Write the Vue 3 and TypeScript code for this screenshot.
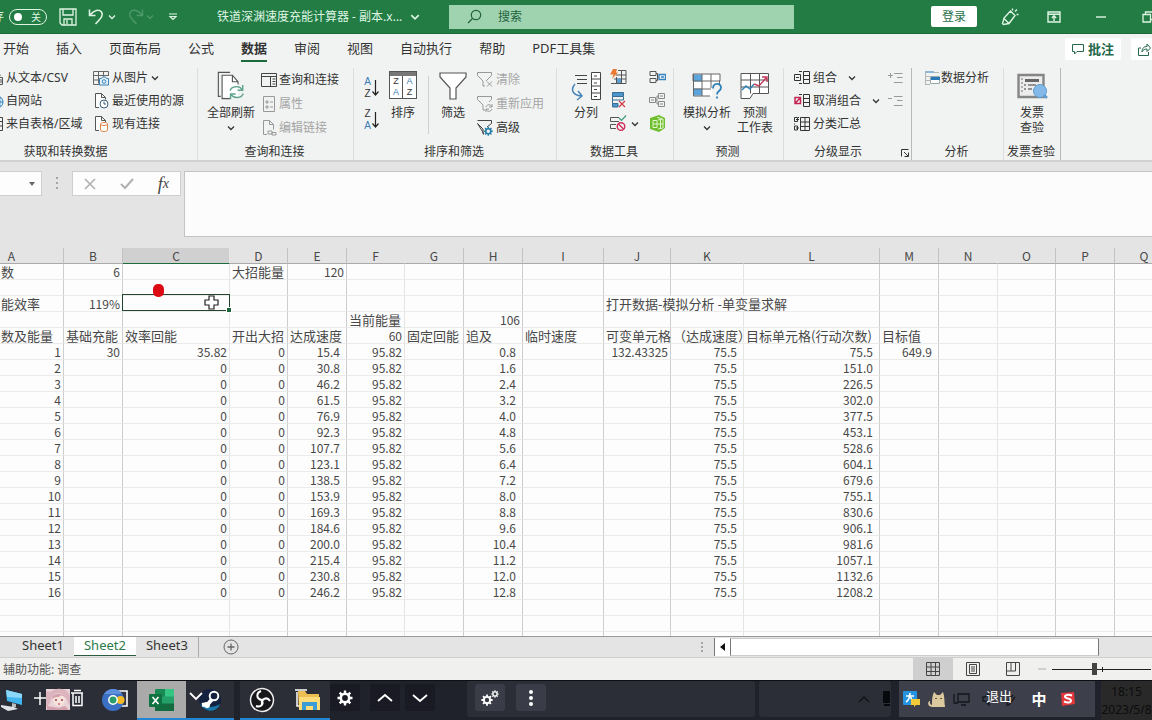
<script setup lang="ts">
import { ref } from 'vue'

interface Cell {
  key: string
  text: string
  kind: string
  span: number
}

const tabs = ['开始', '插入', '页面布局', '公式', '数据', '审阅', '视图', '自动执行', '帮助', 'PDF工具集']
const activeTab = ref('数据')
const sheets = ['Sheet1', 'Sheet2', 'Sheet3']
const activeSheet = ref('Sheet2')
const zoomLevel = ref(43)
const autosave = ref(false)
const formula = ref('')
const cellName = ref('')

const columns = 'ABCDEFGHIJKLMNOPQ'.split('')
const faintColumns = ['C', 'F', 'K', 'N']
const rowCount = 24

const speeds = ['15.4', '30.8', '46.2', '61.5', '76.9', '92.3', '107.7', '123.1', '138.5', '153.9', '169.3', '184.6', '200.0', '215.4', '230.8', '246.2']
const targets = ['75.5', '151.0', '226.5', '302.0', '377.5', '453.1', '528.6', '604.1', '679.6', '755.1', '830.6', '906.1', '981.6', '1057.1', '1132.6', '1208.2']

const values: Record<string, string> = {
  A1: '数', B1: '6', D1: '大招能量', E1: '120',
  A3: '能效率', B3: '119%', J3: '打开数据-模拟分析 -单变量求解',
  F4: '当前能量', H4: '106',
  A5: '数及能量', B5: '基础充能', C5: '效率回能', D5: '开出大招', E5: '达成速度', F5: '60',
  G5: '固定回能', H5: '追及', I5: '临时速度', J5: '可变单元格', K5: '（达成速度）',
  L5: '目标单元格(行动次数)', M5: '目标值',
  B6: '30', J6: '132.43325', M6: '649.9',
}

speeds.forEach((speed, i) => {
  const row = i + 6
  values['A' + row] = String(i + 1)
  values['C' + row] = i === 0 ? '35.82' : '0'
  values['D' + row] = '0'
  values['E' + row] = speed
  values['F' + row] = '95.82'
  values['H' + row] = ((i + 1) * 0.8).toFixed(1)
  values['K' + row] = '75.5'
  values['L' + row] = targets[i]
})

function kindOf(col: string, text: string): string {
  if (!/^[\d.%]+$/.test(text)) return 'text'
  return 'EHKLM'.includes(col) && text.includes('.') ? 'num dec' : 'num'
}

const rows: Cell[][] = Array.from({ length: rowCount }, (_, r) =>
  columns
    .filter((c) => !(r === 2 && (c === 'K' || c === 'L')))
    .map((c) => {
      const key = c + (r + 1)
      const text = values[key] ?? ''
      const faint = faintColumns.includes(c) ? ' faint' : ''
      return { key, text, kind: kindOf(c, text) + faint, span: key === 'J3' ? 3 : 1 }
    }),
)
</script>

<template>
  <div class="window">
    <svg class="defs" aria-hidden="true">
      <symbol id="chev" viewBox="0 0 8 8"><path d="M1 2.5 4 5.5 7 2.5" fill="none" stroke="currentColor" stroke-width="1.3" /></symbol>
      <symbol id="funnel" viewBox="0 0 28 28"><path d="M1 1h26v4L17 16v11h-6V16L1 5z" fill="#fff" stroke="currentColor" stroke-width="1.2" /></symbol>
      <symbol id="gear" viewBox="0 0 16 16">
        <circle cx="8" cy="8" r="4.2" fill="none" stroke="currentColor" stroke-width="2.6" />
        <path d="M8 0.5v3M8 12.5v3M0.5 8h3M12.5 8h3M2.7 2.7l2.1 2.1M11.2 11.2l2.1 2.1M13.3 2.7l-2.1 2.1M4.8 11.2l-2.1 2.1" stroke="currentColor" stroke-width="2.4" />
      </symbol>
    </svg>

    <header class="titlebar">
      <div class="quick">
        <label class="autosave"><span class="clip">存</span><input v-model="autosave" type="checkbox" class="hidden-check" /><span class="toggle"><i></i>关</span></label>
        <button class="tb save" aria-label="保存"><svg width="18" height="18" viewBox="0 0 18 18" fill="none" stroke="currentColor" stroke-width="1.3"><path d="M1 1h16v16H3l-2-2zM4 1v6h10V1M5 17v-6h8v6M8 12v4" /></svg></button>
        <button class="tb undo" aria-label="撤消"><svg width="18" height="18" viewBox="0 0 18 18" fill="none" stroke="currentColor" stroke-width="1.6"><path d="M1.500 1.500v6h6M2 7C6 2 11 1 13.500 4c2.500 3.500-1 6.500-6 12" /></svg><svg width="8" height="8"><use href="#chev" /></svg></button>
        <button class="tb redo" aria-label="恢复"><svg width="18" height="18" viewBox="0 0 18 18" fill="none" stroke="currentColor" stroke-width="1.400"><path d="M16.500 1.500v6h-6M16 7C12 2 7 1 4.500 4c-2.500 3.500 1 6.500 6 12" /></svg><svg width="8" height="8"><use href="#chev" /></svg></button>
        <button class="tb" aria-label="自定义"><svg width="10" height="8" viewBox="0 0 10 8" fill="none" stroke="currentColor" stroke-width="1.2"><path d="M1 1h8M2 3.500h6L5 6.500z" /></svg></button>
      </div>
      <button class="filename">铁道深渊速度充能计算器 - 副本.x...<svg width="10" height="10"><use href="#chev" /></svg></button>
      <label class="search">
        <svg width="15" height="15" viewBox="0 0 15 15" fill="none" stroke="currentColor" stroke-width="1.200"><circle cx="9" cy="6" r="4.700" /><path d="M5.500 9.500 1 14" /></svg>
        <input type="text" placeholder="搜索" aria-label="搜索" />
      </label>
      <div class="window-tools">
        <button class="login">登录</button>
        <button class="tb pen" aria-label="墨迹"><svg width="18" height="18" viewBox="0 0 18 18" fill="none" stroke="currentColor" stroke-width="1.400"><path d="M9.500 3 14 7.500 8 15.500l-5.500 1-1-1 1.500-5.500zM3 10.500l5 5M11.500 2.500V.5M14 3.500l2-2M15.500 6.500h2" /></svg></button>
        <button class="tb" aria-label="功能区显示选项"><svg width="14" height="12" viewBox="0 0 14 12" fill="none" stroke="currentColor" stroke-width="1.400"><path d="M1 1h12v10H1zM1 3.200h12M7 10V5M4.800 7 7 4.800 9.200 7" /></svg></button>
        <button class="tb min" aria-label="最小化"><svg width="10" height="2"><path d="M0 1h10" stroke="currentColor" stroke-width="1.400" /></svg></button>
        <button class="tb" aria-label="还原"><svg width="12" height="12" viewBox="0 0 12 12" fill="none" stroke="currentColor" stroke-width="1.300"><path d="M1 3.500h7.500V11H1zM3.500 3.500V1H11v7.500H8.500" /></svg></button>
      </div>
    </header>

    <nav class="tabs">
      <button v-for="t in tabs" :key="t" class="tab" :class="{ active: t === activeTab }" @click="activeTab = t">{{ t }}</button>
      <div class="spacer"></div>
      <button class="pill comment"><svg width="12" height="12" viewBox="0 0 12 12" fill="none" stroke="currentColor"><path d="M.5 1.500h11v7H5L2.500 11V8.500h-2z" /></svg>批注</button>
      <button class="pill share" aria-label="共享"><svg width="13" height="13" viewBox="0 0 13 13" fill="none" stroke="currentColor"><path d="M3 5H.5v7.500h10V9M4 9c0-4 2-5.500 5-5.500V1l3.500 4L9 8.500V6C7 6 5 6.500 4 9z" /></svg></button>
    </nav>

    <section class="ribbon">
      <div class="group g-get">
        <div class="body">
          <div class="stack cut">
            <button class="cmd"><svg width="16" height="16" viewBox="0 0 16 16" fill="none" stroke="#555"><path d="M3.500 1.500h6l3 4M7.500 7.500h7v7h-7zM9 10h5M9 12h5" /></svg>从文本/CSV</button>
            <button class="cmd"><svg width="16" height="16" viewBox="0 0 16 16" fill="none" stroke="#2f80bd"><circle cx="9" cy="9" r="6" fill="#dceefa" /><ellipse cx="9" cy="9" rx="3" ry="6" /><path d="M3 9h12M5 5h8M5 13h8" /></svg>自网站</button>
            <button class="cmd"><svg width="16" height="16" viewBox="0 0 16 16" fill="none" stroke="#444"><path d="M1.500 1.500h13v13h-13zM1 5.500h13M8 5v9M1 10h13" /></svg>来自表格/区域</button>
          </div>
          <div class="stack">
            <button class="cmd"><svg width="16" height="16" viewBox="0 0 16 16" fill="none" stroke="#666"><path d="M15.500 6V1.500H.5v13H6M.5 5.500h15M.5 10H6M5.500 1.500v12M10.500 1.500v5" /><path d="M6.500 8.500h2l1-1.500h3l1 1.500h2v6.500h-9z" fill="#e3f1fb" stroke="#3a82b8" /><circle cx="11" cy="11.500" r="1.800" stroke="#3a82b8" /></svg>从图片<svg class="chev" width="8" height="8"><use href="#chev" /></svg></button>
            <button class="cmd"><svg width="16" height="16" viewBox="0 0 16 16" fill="none" stroke="#555"><path d="M6 14.500H2.500v-14h6l4 4v2M8.500.5v4h4" fill="#fff" /><circle cx="11" cy="11" r="4" fill="#fff" stroke="#3b5f7f" /><path d="M11 8.500V11h2" stroke="#3b5f7f" /></svg>最近使用的源</button>
            <button class="cmd"><svg width="16" height="16" viewBox="0 0 16 16" fill="none" stroke="#555"><path d="M6 14.500H2.500v-14h6l4 4v2M8.500.5v4h4" fill="#fff" /><path d="M7.500 8v6c0 2 7 2 7 0V8c0-2-7-2-7 0s7 2 7 0" fill="#fff" stroke="#d98548" /></svg>现有连接</button>
          </div>
        </div>
        <div class="caption">获取和转换数据</div>
      </div>

      <div class="group g-query">
        <div class="body">
          <button class="big wide"><svg width="30" height="32" viewBox="0 0 30 32" fill="none" stroke="#555" stroke-width="1.200"><path d="M4 27H1.500V1.500H14" /><path d="M5.500 4.500h10l7 7v16h-17z" fill="#fff" stroke="none" /><path d="M14 29.500H5.500v-25h11l6 7v3M16.500 4.500v7h6" /><path d="M14 21c1.500-5 10-6 13-1M27.500 15v5.500H22M28 24c-1.500 5-10 6-13 1M14.500 30v-5.500H20" stroke="#5fa58d" stroke-width="1.500" /></svg><span>全部刷新</span><svg width="8" height="8"><use href="#chev" /></svg></button>
          <div class="stack loose">
            <button class="cmd"><svg width="16" height="16" viewBox="0 0 16 16" fill="none" stroke="#444"><path d="M.5 1.500h15v13H.5zM.5 4.500h15M9.500 4.500v10M11.500 7h3M11.500 9.500h3M11.500 12h3" /></svg>查询和连接</button>
            <button class="cmd off" disabled><svg width="16" height="16" viewBox="0 0 16 16" fill="none" stroke="#999"><path d="M2.500.5h11v15h-11z" /><path d="M5 5h2v2H5zM5 10h2v2H5zM9 6h3M9 11h3" /></svg>属性</button>
            <button class="cmd off" disabled><svg width="16" height="16" viewBox="0 0 16 16" fill="none" stroke="#999"><path d="M6 14.500H2.500v-14h6l4 4v5M8.500.5v4h4M7 11h4v3H7zM11 12.500h4V15h-4z" /></svg>编辑链接</button>
          </div>
        </div>
        <div class="caption">查询和连接</div>
      </div>

      <div class="group g-sort">
        <div class="body">
          <div class="az">
            <button class="sort" aria-label="升序"><span><b>A</b><em>Z</em></span><svg width="7" height="18" viewBox="0 0 7 18" fill="none" stroke="#222" stroke-width="1.200"><path d="M3.500 1v15M.5 12.500l3 3.500 3-3.500" /></svg></button>
            <button class="sort" aria-label="降序"><span><em>Z</em><b>A</b></span><svg width="7" height="18" viewBox="0 0 7 18" fill="none" stroke="#222" stroke-width="1.200"><path d="M3.500 1v15M.5 12.500l3 3.500 3-3.500" /></svg></button>
          </div>
          <button class="big"><span class="sort-box"><i></i><b>Z</b><b class="blue">A</b><b class="blue">A</b><b>Z</b></span><span>排序</span></button>
          <div class="rule"></div>
          <button class="big"><svg width="28" height="28" color="#555"><use href="#funnel" /></svg><span>筛选</span></button>
          <div class="stack loose">
            <button class="cmd off" disabled><svg width="16" height="16" viewBox="0 0 16 16" fill="none" stroke="#999"><path d="M.5.5h14v3L9 9M6 14V9L.5 3.500v-3M6 14h2M10 9.500l5 5M15 9.500l-5 5" /></svg>清除</button>
            <button class="cmd off" disabled><svg width="16" height="16" viewBox="0 0 16 16" fill="none" stroke="#999"><path d="M.5.500h14v3L12 6M6 14V9L.5 3.500v-3M6 14h2M9 11c1-3 5-3 6 0M15 8v3h-3M15 13c-1 3-5 3-6 0M9 16v-3h3" /></svg>重新应用</button>
            <button class="cmd"><svg width="16" height="16" viewBox="0 0 16 16" fill="none" stroke="#444"><path d="M.5.500h14v3L10 7M7 14H6V9L.5 3.500z" /><g transform="translate(6.500 6.500) scale(.6)" color="#277fa8"><use href="#gear" width="16" height="16" /></g></svg>高级</button>
          </div>
        </div>
        <div class="caption">排序和筛选</div>
      </div>

      <div class="group g-tools">
        <div class="body">
          <button class="big"><svg width="30" height="30" viewBox="0 0 30 30" fill="none" stroke="#444"><path d="M20.500 1.500h9v27h-9zM20.500 8h9M20.500 15h9M20.500 22h9" fill="#fff" /><path d="M23 5h3M23 12h3M23 18.500h3M23 25.500h3M4 4.500h12M6 8.500h10M6 12.500h10" /><path d="M4 13c-5 6-2 11 6 12M7 20l4 5-5 4" stroke="#4b85ba" stroke-width="1.500" /></svg><span>分列</span></button>
          <div class="icons">
            <button aria-label="快速填充"><svg width="17" height="16" viewBox="0 0 17 16" fill="none" stroke="#555"><path d="M1 14.500h15v-13H8M6 6h10M4 10h12M11.500 1.500v13M6.500 8v7" /><path d="M7 9.500h4V14H7z" fill="#5a9fd2" stroke="none" /><path d="M3 0h4L6 3.500h2L2 10l1.500-4.500H0z" fill="#e97a32" stroke="none" /></svg></button>
            <button aria-label="删除重复值"><svg width="17" height="16" viewBox="0 0 17 16" fill="none" stroke="#3b6d94"><path d="M2.500 .500h11v4h-11z" fill="#4e95cc" /><path d="M2.500 4.500v7H8M2.500 8h11V5" /><path d="M2.500 11.500H8V15H2.500z" fill="#4e95cc" /><path d="m9 9 6 6M15 9l-6 6" stroke="#d33a45" stroke-width="1.200" /></svg></button>
            <button aria-label="数据验证"><svg width="17" height="16" viewBox="0 0 17 16" fill="none" stroke="#555"><path d="M9 2.500H.5v4H9M6 9.500H.5v4H6" /><path d="m9 3 2.500 2.500L16 .500" stroke="#3a9a75" stroke-width="1.200" /><circle cx="11" cy="11.500" r="3.800" stroke="#cf2e5b" stroke-width="1.400" /><path d="m8.500 9 5 5" stroke="#cf2e5b" stroke-width="1.400" /></svg></button>
          </div>
          <svg class="low-chev" width="8" height="8"><use href="#chev" /></svg>
          <div class="icons">
            <button aria-label="合并计算"><svg width="17" height="16" viewBox="0 0 17 16" fill="none" stroke="#555"><path d="M1 2.500h6v4H1zM1 9.500h6v4H1zM7 4.500h1.500v7H7M8.500 8H10" /><path d="M10 5.500h6.500v5H10zM12 8h3" stroke="#3884be" stroke-width="1.300" /></svg></button>
            <button aria-label="关系"><svg width="17" height="16" viewBox="0 0 17 16" fill="none" stroke="#888"><path d="M.5 5.500h6v5h-6zM9.500 1.500h6v5h-6zM9.500 9.500h6v5h-6zM6.500 8h1.500M9 4H8v8h1M2 8h3M11 4h3M11 12h3" /></svg></button>
            <button aria-label="管理数据模型"><svg width="17" height="17" viewBox="0 0 17 17"><path d="m1 3 9-3 6 3v10l-6 4-9-3z" fill="#6fbe2f" /><path d="M4 5.500h4v7H4zM9 5l5-1v9l-5 1M4 9h10M11.500 4v9M8 2.500l5 1" fill="none" stroke="#e1f5cd" /></svg></button>
          </div>
        </div>
        <div class="caption">数据工具</div>
      </div>

      <div class="group g-forecast">
        <div class="body">
          <button class="big"><svg width="30" height="29" viewBox="0 0 30 29" fill="none" stroke="#666"><path d="M1 2.500h27v22H1z" fill="#fff" stroke="none" /><path d="M1 3h9v7H1zM1 17h9v7H1z" fill="#5ba4dc" stroke="none" /><path d="M1 2.500h27v7H1zM1.500 2.500v22H18M10 2.500v22M19 2.500v14M1 17.500h18M27.500 9v4" /><path d="M20 14h10v14H20z" fill="#f1f3f2" stroke="none" /><path d="M21 17c0-6 8-6 8-1 0 4-4 3-4 7M25 25v2" stroke="#2d83b7" stroke-width="1.800" /></svg><span>模拟分析</span><svg width="8" height="8"><use href="#chev" /></svg></button>
          <button class="big"><svg width="30" height="28" viewBox="0 0 30 28" fill="none" stroke="#555"><path d="M1 1.500h27.500v20H13l-3 5H1z" fill="#fff" /><path d="M1 8h27M1 15h27M10.500 1.500v20M19.500 1.500v20" /><path d="m2 18 4-4 4 3 4-5" stroke="#2d83b7" stroke-width="1.400" /><path d="m14 12 5 2 7-8M22 5h5v5" stroke="#c3385c" stroke-width="1.400" /></svg><span>预测<br />工作表</span></button>
        </div>
        <div class="caption">预测</div>
      </div>

      <div class="group g-outline">
        <div class="body">
          <div class="stack">
            <button class="cmd"><svg width="16" height="16" viewBox="0 0 16 16" fill="none" stroke="#333"><path d="M9.500 1.500h6v12h-6zM9.500 5.500h6M9.500 9.500h6M8 1.500H5M8 13.500H5M.5 4.500h6v6h-6zM2 7.500h3" /></svg>组合<svg class="chev far" width="8" height="8"><use href="#chev" /></svg></button>
            <button class="cmd"><svg width="16" height="16" viewBox="0 0 16 16" fill="none" stroke="#333"><path d="M9.500 1.500h6v12h-6zM9.500 5.500h6M9.500 9.500h6M8 1.500H5" /><path d="M1 4.500h5.500v6H1zM1 10.500l5.500-6" stroke="#c52754" stroke-width="1.500" /></svg>取消组合<svg class="chev far" width="8" height="8"><use href="#chev" /></svg></button>
            <button class="cmd"><svg width="16" height="16" viewBox="0 0 16 16" fill="none" stroke="#333"><path d="M6.500 1.500h9v13h-9zM6.500 6h9M6.500 10.500h9M11 1.500v13M.5 1.500h3v4h-3zM.5 10h3v4h-3zM4 1.500h1M.5 7.500v1M2 3.500h3M2 12h3" /></svg>分类汇总</button>
          </div>
          <div class="levels">
            <button disabled aria-label="显示明细数据"><svg width="15" height="12" viewBox="0 0 15 12" stroke="#999" fill="none"><path d="M0 3.500h5M2.500 1v5M6 1.500h8.500M9 5.500h5.500M6 10.500h8.500" /></svg></button>
            <button disabled aria-label="隐藏明细数据"><svg width="15" height="12" viewBox="0 0 15 12" stroke="#999" fill="none"><path d="M0 3.500h4M6 1.500h8.500M9 5.500h5.500M6 10.500h8.500" /></svg></button>
          </div>
        </div>
        <div class="caption">分级显示<button class="launcher" aria-label="分级显示设置"><svg width="8" height="8" viewBox="0 0 8 8" fill="none" stroke="#333"><path d="M.5 7.500v-7h7M3 3l4 4M7.500 3.500v4h-4" /></svg></button></div>
      </div>

      <div class="group g-analysis">
        <div class="body">
          <div class="stack">
            <button class="cmd"><svg width="16" height="16" viewBox="0 0 16 16" fill="none"><path d="M1 2.500h14M1 6.500h5M1 10.500h5M1 14.500h5M1.500 2v12" stroke="#b5b5b5" /><path d="M1 1h9v2H1z" fill="#90b7d4" /><path d="M6.500 6.500h9v7h-9z" fill="#fff" stroke="#9aa" /><path d="M7 7h9v3H7z" fill="#2b79b8" /></svg>数据分析</button>
          </div>
        </div>
        <div class="caption">分析</div>
      </div>

      <div class="group g-invoice">
        <div class="body">
          <button class="big"><svg width="32" height="28" viewBox="0 0 32 28" fill="none" stroke="#777"><path d="M2.500 3h25v22h-25z" fill="#ececec" stroke="#858585" stroke-width="2.400" /><path d="M6 6v16" stroke-dasharray="2 2" /><path d="M9 8.500h14" stroke-width="3" stroke="#666" /><path d="M8 13h2M12 13h8M8 17h2M12 17h4" stroke-width="1.600" /><circle cx="24" cy="19" r="6.500" fill="#83b9e8" stroke="#5c9bd0" /><path d="m28 23 3 3" stroke="#5c9bd0" stroke-width="2.500" /></svg><span>发票<br />查验</span></button>
        </div>
        <div class="caption">发票查验</div>
      </div>
    </section>

    <section class="formula-row">
      <label class="namebox"><input v-model="cellName" type="text" aria-label="名称框" /><svg width="6" height="4"><path d="M0 0h6L3 4z" fill="#666" /></svg></label>
      <div class="grip"><i></i><i></i><i></i></div>
      <div class="fx">
        <button aria-label="取消"><svg width="12" height="12" viewBox="0 0 12 12"><path d="m1 1 10 10M11 1 1 11" stroke="#b0b0b0" stroke-width="1.600" /></svg></button>
        <button aria-label="输入"><svg width="14" height="12" viewBox="0 0 14 12"><path d="m1 6 4 4 8-9" fill="none" stroke="#b0b0b0" stroke-width="2" /></svg></button>
        <button class="fn" aria-label="插入函数">f<small>x</small></button>
      </div>
      <textarea v-model="formula" aria-label="编辑栏"></textarea>
    </section>

    <main class="grid">
      <table>
        <colgroup><col v-for="c in columns" :key="c" :class="'col-' + c" /></colgroup>
        <thead>
          <tr><th v-for="c in columns" :key="c" scope="col" :class="{ chosen: c === 'C', faint: faintColumns.includes(c) }">{{ c }}</th></tr>
        </thead>
        <tbody>
          <tr v-for="(row, r) in rows" :key="r">
            <td v-for="cell in row" :key="cell.key" :colspan="cell.span" :class="[cell.kind, { selected: cell.key === 'C3' }]">
              {{ cell.text }}<template v-if="cell.key === 'C3'"><i class="dot"></i><i class="handle"></i><svg class="pointer" width="15" height="15" viewBox="0 0 15 15"><path d="M5 1h5v4h4v5h-4v4H5v-4H1V5h4z" fill="#fff" stroke="#222" stroke-width="1.200" /></svg></template>
            </td>
          </tr>
        </tbody>
      </table>
    </main>

    <footer class="sheetbar">
      <div class="sheets">
        <button v-for="s in sheets" :key="s" class="sheet" :class="{ active: s === activeSheet }" @click="activeSheet = s">{{ s }}</button>
      </div>
      <button class="add" aria-label="新工作表"><svg width="16" height="16" viewBox="0 0 16 16" fill="none" stroke="#666"><circle cx="8" cy="8" r="7" /><path d="M8 4.500v7M4.500 8h7" stroke-width="1.300" /></svg></button>
      <div class="spacer"></div>
      <div class="grip small"><i></i><i></i><i></i></div>
      <div class="scroll"><button aria-label="向左滚动"><svg width="5" height="8"><path d="M5 0v8L0 4z" fill="#111" /></svg></button><div class="thumb"></div></div>
    </footer>

    <footer class="status">
      <span class="message">辅助功能: 调查</span>
      <div class="spacer"></div>
      <button class="view on" aria-label="普通"><svg width="14" height="14" viewBox="0 0 14 14" fill="none" stroke="#444"><path d="M.5.500h13v13H.5zM5 .500v13M9.500.500v13M.5 5h13M.5 9.500h13" /></svg></button>
      <button class="view" aria-label="页面布局"><svg width="14" height="14" viewBox="0 0 14 14" fill="none" stroke="#444"><path d="M.5.500h13v13H.5zM3.500 2.500h7v9h-7zM5 5h4M5 7h4M5 9h4" /></svg></button>
      <button class="view" aria-label="分页预览"><svg width="14" height="14" viewBox="0 0 14 14" fill="none" stroke="#444"><path d="M.5 13.500V.500h13v13zM5 .500V9M9.500.500V9M.5 9h9" /></svg></button>
      <span class="minus"></span>
      <label class="zoom"><input v-model="zoomLevel" type="range" min="0" max="100" aria-label="缩放" /></label>
    </footer>

    <footer class="taskbar">
      <button class="task pc" aria-label="此电脑"><svg width="24" height="22" viewBox="0 0 24 22"><path d="m6 1 16 4v11L7 12z" fill="#41b5ee" /><path d="m6 1 16 4v4L7 8z" fill="#8bd8fa" /><path d="m12 14 4 1v3h-4z" fill="#bbb" /><path d="m1 16 13 2 4 2-10 2-7-4z" fill="#dfe3e6" /></svg></button>
      <button class="task combo" aria-label="添加和删除">
        <svg width="52" height="24" viewBox="0 0 52 24" fill="none">
          <path d="M1 10h12M7 4v13M38 5h12M41 2.500h7M40 5v12.500h9V5M43 8v7M46 8v7" stroke="#fff" stroke-width="1.500" />
          <path d="M13 1h24v21H13z" fill="#e8d3d8" /><path d="M13 3c6 2 7-2 11-2 7-1 12 2 13 8v8c-3-3-3-7-6-10-5-3-10-2-13 4-1 3-1 6-5 8z" fill="#dcb4be" /><ellipse cx="26" cy="12" rx="6" ry="6" fill="#f9e4dc" /><path d="M19 11c0-6 12-7 14-1-4-3-5-3-7-1-2 0-4 0-7 2zM14 18l6 1 6 1 6-2 4 4H14z" fill="#d4a0ac" /><path d="M22 12h2M28 12h2" stroke="#8b4a58" stroke-width="1.500" /><path d="M25 16h2" stroke="#c5304a" />
        </svg>
      </button>
      <button class="task browser" aria-label="浏览器"><svg width="27" height="24" viewBox="0 0 27 24"><path d="M15 3h10v15H15" fill="#333743" stroke="#fff" stroke-width="1.600" /><circle cx="11" cy="12" r="11" fill="#3a6fc4" /><path d="M2 6C7-1 16 0 20 6z" fill="#5e90dc" /><circle cx="18.500" cy="12" r="4" fill="#f4b825" /><circle cx="11" cy="12" r="4.200" fill="#2a9d6a" stroke="#fff" stroke-width="1.500" /></svg></button>
      <button class="task excel" aria-label="Excel"><svg width="26" height="24" viewBox="0 0 26 24"><rect x="6" y="1" width="19" height="22" rx="1.500" fill="#24a168" /><path d="M6 8.500h10V1H7.500Q6 1 6 2.500z" fill="#1a8a55" /><path d="M16 1h9v7.500h-9z" fill="#35c481" /><path d="M6 15.500h19V23H6z" fill="#146b40" /><rect y="6" width="13" height="13" rx="1" fill="#0f7140" /><path d="m3.500 9 6 7M9.500 9l-6 7" stroke="#fff" stroke-width="1.700" /></svg></button>
      <button class="task steam" aria-label="Steam"><svg width="34" height="24" viewBox="0 0 34 24" fill="none"><circle cx="21" cy="12" r="11" fill="#14213f" /><path d="M11 16c5 4 14 4 20 0-3 9-15 9-20 0z" fill="#1a78a8" /><path d="m13 17 6-1 6-7" stroke="#fff" stroke-width="4" /><circle cx="25" cy="8" r="4.300" fill="#14213f" stroke="#fff" stroke-width="2" /><circle cx="18" cy="17" r="3" fill="#fff" /><path d="m1 5 6 6 6-6" stroke="#fff" stroke-width="1.800" /></svg></button>
      <button class="task obs" aria-label="OBS"><svg width="26" height="26" viewBox="0 0 26 26" fill="none"><circle cx="13" cy="13" r="11.500" fill="#17171b" stroke="#eee" stroke-width="1.500" /><path d="M12 4c-5 2-5 8 1 9M21 14c-3-5-9-2-8 3M7 19c5 2 9-3 5-6" stroke="#fff" stroke-width="2" /></svg></button>
      <button class="task folder" aria-label="文件资源管理器"><svg width="28" height="24" viewBox="0 0 28 24"><path d="M2 2h12M4 4v14h4" stroke="#fff" stroke-width="1.500" fill="none" /><path d="M5 3h7l2 3h12v16H6z" fill="#edbf52" /><path d="M6 9h21v13H6z" fill="#ffdc7a" /><path d="M9 22v-8h15v8h-4v-4h-7v4z" fill="#399cd4" /></svg></button>
      <button class="tile" aria-label="设置"><svg width="16" height="16"><use href="#gear" /></svg></button>
      <button class="tile up" aria-label="向上"><svg width="16" height="10" viewBox="0 0 16 10" fill="none"><path d="m1 8 7-6 7 6" stroke="currentColor" stroke-width="1.800" /></svg></button>
      <button class="tile" aria-label="向下"><svg width="16" height="10" viewBox="0 0 16 10" fill="none"><path d="m1 2 7 6 7-6" stroke="currentColor" stroke-width="1.800" /></svg></button>
      <div class="panel main-panel">
        <button class="tile light" aria-label="选项"><svg width="18" height="16" viewBox="0 0 18 16"><use href="#gear" x="0" y="4" width="12" height="12" /><use href="#gear" x="10" y="0" width="8" height="8" /></svg></button>
        <button class="tile light" aria-label="更多"><svg width="6" height="18" fill="#fff"><circle cx="3" cy="3" r="2" /><circle cx="3" cy="9" r="2" /><circle cx="3" cy="15" r="2" /></svg></button>
      </div>
      <div class="panel side-panel">
        <svg width="12" height="7" viewBox="0 0 12 7" fill="none"><path d="m1 6 5-5 5 5" stroke="#111217" stroke-width="1.300" /></svg>
        <svg width="8" height="16" viewBox="0 0 8 16"><rect width="7" height="12" rx="1" fill="#08090c" /><path d="M1 14h6" stroke="#08090c" stroke-width="2" /></svg>
      </div>
      <div class="tray">
        <svg width="17" height="16" viewBox="0 0 17 16"><rect width="14" height="14" rx="1" fill="#2593df" /><path d="M3 5h8M7 2c0 4-1 7-4 9M7 5c1 3 2 4 4 5" stroke="#fff" stroke-width="1.600" fill="none" /><path d="M8 8h9v6h-4l-2 2v-2H8z" fill="#f2c938" /></svg>
        <svg width="17" height="17" viewBox="0 0 17 17"><path d="M4 16C4 9 4 6 6 1l3 3h3l3-3c2 5 1 10 2 15z" fill="#ddc9a0" /><path d="M5 15c-5 0-4-4-3-4" stroke="#ddc9a0" stroke-width="2" fill="none" /><path d="M8 7v1M13 7v1" stroke="#332" stroke-width="1.500" /></svg>
        <svg width="17" height="13" viewBox="0 0 17 13" fill="none" stroke="#15161b" stroke-width="1.300"><path d="M5 1h11v8H5zM8 12h5M1 1v9h4" /></svg>
        <span class="exit"><svg width="34" height="14" viewBox="0 0 34 14" fill="none" stroke="#17181d" stroke-width="1.300"><path d="M1 5h2l4-4v12L3 9H1zM25 11l6-8M27 13l6-8M25 11v2h2" /></svg><button>退出</button></span>
        <button class="ime">中</button>
        <svg width="16" height="16" viewBox="0 0 16 16"><path d="m1 2 13-1 1 12-13 2z" fill="#e2383b" /><path d="M12 4.500C8 3 4.500 4 5 6s6 1 6 3.500-4 2.500-7 1" fill="none" stroke="#fff" stroke-width="2" /></svg>
      </div>
      <div class="clock"><time>18:15</time><time>2023/5/8</time></div>
    </footer>
  </div>
</template>

<style>
body { margin: 0; overflow: hidden; }
</style>

<style scoped>
* { box-sizing: border-box; }
.window { display: flex; flex-direction: column; height: 100vh; overflow: hidden; background: #e4e4e4; color: #333; font: 12px/16px "Noto Sans", "Noto Sans CJK SC", sans-serif; }
.defs { display: none; }
button { display: flex; align-items: center; justify-content: center; margin: 0; padding: 0; border: 0; background: none; color: inherit; font: inherit; white-space: nowrap; }
input, textarea { margin: 0; padding: 0; border: 0; outline: 0; background: none; font: inherit; color: inherit; }
svg { flex: none; display: block; }
.spacer { flex: 1; }

.titlebar { display: flex; align-items: center; flex: none; height: 34px; background: #227c43; border-bottom: 1px solid #1c6a38; color: #dff5e3; }
.quick { display: flex; align-items: center; width: 217px; flex: none; }
.autosave { display: flex; align-items: center; width: 47px; margin-right: 12px; }
.clip { display: flex; justify-content: flex-end; width: 4px; margin-right: 5px; overflow: hidden; }
.hidden-check { position: absolute; opacity: 0; width: 1px; height: 1px; }
.toggle { display: flex; align-items: center; justify-content: space-between; width: 38px; height: 16px; padding: 0 5px 0 4px; border: 1px solid #dff5e3; border-radius: 8px; font-size: 10px; line-height: 14px; }
.toggle i { width: 8px; height: 8px; border-radius: 4px; background: #fff; }
.save { margin-right: 11px; }
.undo, .redo { gap: 2px; }
.undo { margin-right: 10px; }
.redo { margin-right: 14px; color: #4f9869; }
.filename { gap: 8px; width: 202px; margin-right: 30px; justify-content: flex-start; }
.search { display: flex; align-items: center; flex: 1; min-width: 0; height: 24px; padding-left: 18px; gap: 16px; background: #9fd3b0; color: #23633f; }
.search input { flex: 1; min-width: 0; }
.search input::placeholder { color: #23633f; opacity: 1; }
.window-tools { display: flex; align-items: center; flex: none; width: 358px; padding-left: 137px; overflow: hidden; }
.login { width: 46px; height: 21px; margin-right: 24px; flex: none; border-radius: 2px; background: #fff; color: #27704a; }
.pen { margin-right: 28px; }
.min { margin: 0 36px 0 35px; }

.tabs { display: flex; align-items: flex-start; flex: none; height: 32px; padding: 4px 0 0 3px; gap: 27px; background: #f1f3f2; font-size: 13px; }
.tab { height: 24px; padding-bottom: 3px; border-bottom: 2px solid transparent; line-height: 20px; flex: none; }
.tab.active { font-weight: 700; border-bottom-color: #1d6b3c; }
.tabs .spacer { margin: 0 -27px; }
.pill { height: 22px; background: #fff; border-radius: 2px; color: #24694a; flex: none; }
.comment { width: 56px; gap: 4px; font-weight: 700; margin-right: -17px; }
.share { width: 21px; padding-left: 7px; justify-content: flex-start; overflow: hidden; }

.ribbon { display: flex; flex: none; height: 96px; background: #f1f3f2; border-bottom: 2px solid #d0d1d1; overflow: hidden; }
.group { display: flex; flex-direction: column; flex: none; height: 92px; margin-top: 2px; border-right: 1px solid #dcdddc; }
.g-get { width: 198px; }
.g-query { width: 156px; }
.g-sort { width: 203px; }
.g-tools { width: 117px; }
.g-forecast { width: 110px; }
.g-outline { width: 128px; border-right-color: #b8b8b8; }
.g-analysis { width: 92px; }
.g-invoice { width: 57px; border-right-color: #b8b8b8; }
.body { display: flex; align-items: flex-start; flex: 1; }
.caption { position: relative; padding-right: 2px; text-align: center; line-height: 16px; height: 16px; flex: none; }
.g-get .caption { padding-right: 66px; }
.g-outline .caption { padding-right: 19px; }
.launcher { position: absolute; right: 2px; top: 5px; }
.stack { display: flex; flex-direction: column; gap: 7px; padding-top: 2px; }
.stack.loose { gap: 8px; padding-top: 4px; }
.cmd { height: 16px; gap: 3px; justify-content: flex-start; }
.off { color: #a5a5a5; }
.cut { width: 105px; margin-left: -12px; }
.cut .cmd { gap: 2px; }
.far { margin-left: 8px; }
.big { flex-direction: column; flex: none; width: 48px; line-height: 15px; padding-top: 3px; justify-content: flex-start; }
.big > svg:first-child { height: 30px; margin-bottom: 4px; }
.big > svg:last-child { margin-top: 4px; }
.big span { text-align: center; }
.g-query .body { padding-left: 9px; gap: 6px; }
.g-query .stack .cmd { gap: 2px; }
.g-sort .body { padding-left: 10px; }
.az { display: flex; flex-direction: column; gap: 8px; width: 15px; padding-top: 8px; }
.sort { gap: 1px; height: 24px; }
.sort span { display: flex; flex-direction: column; font: 10px/12px "Liberation Sans", sans-serif; }
.sort b, .sort-box .blue { color: #3a7cb5; }
.sort b, .sort em { font-weight: 400; font-style: normal; }
.sort-box { display: grid; grid-template-columns: 13px 13px; grid-template-rows: 4px 11px 11px; width: 28px; border: 1px solid #555; background: #fff; height: 28px; margin-bottom: 6px; font: 9px/11px "Liberation Sans", sans-serif; }
.sort-box i { grid-column: 1 / 3; background: #777; }
.sort-box b { font-weight: 400; }
.sort-box b:nth-of-type(odd) { border-right: 1px solid #555; }
.rule { width: 1px; height: 58px; margin: 8px 0 0 1px; background: #cfcfcf; }
.g-tools .body { padding-left: 5px; }
.icons { display: flex; flex-direction: column; gap: 7px; padding-top: 1px; }
.icons button { height: 16px; }
.low-chev { margin: 52px 10px 0 4px; }
.g-forecast .body { padding-left: 9px; }
.g-outline .body { padding-left: 10px; }
.g-outline .stack { width: 94px; }
.levels { display: flex; flex-direction: column; gap: 11px; padding-top: 4px; }
.g-analysis .body { padding-left: 12px; }
.g-analysis .cmd { gap: 1px; }
.g-invoice .body { padding-left: 4px; }

.formula-row { display: flex; align-items: flex-start; flex: none; height: 86px; padding-top: 9px; }
.namebox { display: flex; align-items: center; width: 42px; height: 25px; padding-right: 6px; background: #fdfdfd; border: 1px solid #cfcfcf; border-left: 0; }
.namebox input { flex: 1; min-width: 0; }
.grip { display: flex; flex-direction: column; align-items: center; justify-content: center; gap: 3px; width: 30px; height: 24px; }
.grip i { width: 2px; height: 2px; background: #a5a5a5; }
.fx { display: flex; align-items: center; justify-content: space-between; width: 109px; height: 25px; padding: 0 11px; margin-right: 3px; background: #fdfdfd; border: 1px solid #cfcfcf; }
.fn { font: italic 18px/20px "Liberation Serif", serif; color: #444; }
.fn small { font-size: 14px; }
textarea { flex: 1; height: 66px; resize: none; background: #fcfcfc; border: 1px solid #c4c4c4; border-right: 0; }

.grid { flex: 1; min-height: 0; overflow: hidden; background: #fdfdfd; }
table { table-layout: fixed; width: 100%; min-width: 1174px; border-collapse: separate; border-spacing: 0; font: 13px/15px "Noto Sans CJK SC", sans-serif; color: #484848; }
.col-A { width: 64px; }
.col-B, .col-E, .col-G, .col-H, .col-M, .col-N, .col-P { width: 59px; }
.col-C { width: 107px; }
.col-D, .col-F, .col-O { width: 58px; }
.col-I { width: 81px; }
.col-J { width: 67px; }
.col-K { width: 73px; }
.col-L { width: 136px; }
th { height: 16px; padding: 0; background: #e4e4e4; border-right: 1px solid #c2c2c2; border-bottom: 1px solid #aaa; font-weight: 400; font-size: 12px; }
th:first-child { padding-right: 40px; }
th.chosen { background: #d0d0d0; border-bottom-color: #1d6b3c; }
td { height: 16px; padding: 0 2px; border-right: 1px solid #cecece; border-bottom: 1px solid #ebebeb; white-space: nowrap; }
td.faint, th.faint { border-right-color: #e5e5e5; }
td:first-child { padding-left: 1px; }
td.num { text-align: right; font-size: 12px; }
td.dec { padding-right: 6px; }
.selected { position: relative; }
.selected::after { content: ""; position: absolute; inset: -2px -1px 0 -1px; border: 1px solid #21452f; }
.handle { position: absolute; right: -2px; bottom: -1px; width: 4px; height: 4px; background: #21633c; outline: 1px solid #fff; z-index: 1; }
.dot { position: absolute; left: 30px; top: -12px; width: 11px; height: 13px; border-radius: 5px; background: #dc0a12; z-index: 2; }
.pointer { position: absolute; right: 10px; top: -1px; z-index: 1; }

.sheetbar { display: flex; align-items: center; flex: none; height: 22px; background: #e4e4e4; border-top: 1px solid #999; border-bottom: 1px solid #cfcfcf; font-size: 13px; }
.sheets { display: flex; align-self: stretch; margin-left: 12px; border-right: 1px solid #aaa; }
.sheet { height: 19px; padding: 0 10px 4px; }
.sheet.active { background: #fff; color: #2c7a4b; border-bottom: 1px solid #2b5b40; padding-bottom: 3px; }
.add { margin-left: 24px; }
.grip.small { width: 24px; height: 18px; gap: 2px; }
.scroll { display: flex; width: 438px; height: 18px; padding-right: 53px; }
.scroll button { width: 16px; background: #fff; border-left: 1px solid #777; }
.thumb { flex: 1; background: #fff; border: 1px solid #ccc; border-left-color: #777; border-right-color: #777; }

.status { display: flex; align-items: center; flex: none; height: 22px; padding-left: 3px; background: #f0f1ef; color: #555; }
.message { padding-top: 2px; }
.view { width: 40px; height: 22px; }
.view.on { background: #cfcfcf; }
.minus { width: 8px; height: 2px; margin: 0 6px 0 5px; background: #cfcfcf; }
.zoom { display: flex; width: 100px; }
.zoom input { appearance: none; width: 99px; height: 14px; background: linear-gradient(#222, #222) center / 100% 1px no-repeat, linear-gradient(#222, #222) 50px center / 1px 5px no-repeat; }
.zoom input::-webkit-slider-thumb { appearance: none; width: 5px; height: 12px; background: #444; }

.taskbar { display: flex; align-items: flex-start; flex: none; height: 40px; background: #1f212b; border-top: 1px solid #0e0f14; color: #fff; }
.task { flex: none; height: 39px; background: #2b2d37; border-bottom: 2px solid transparent; }
.pc { width: 24px; }
.combo { width: 70px; }
.browser { width: 43px; }
.excel { width: 49px; background: #aaaaab; border-color: #2187d5; }
.steam { width: 48px; margin-right: 6px; justify-content: flex-start; padding-left: 3px; border-color: #2187d5; }
.obs { width: 44px; border-color: #2187d5; }
.folder { width: 46px; border-color: #2187d5; }
.tile { flex: none; width: 30px; height: 27px; margin-top: 3px; background: #191a24; border-radius: 3px; }
.tile + .tile { margin-left: 5px; }
.tile + .up { margin-left: 10px; }
.panel { display: flex; height: 36px; background: #2b2e37; border-radius: 3px; }
.main-panel { flex: 1; min-width: 90px; margin: 0 4px 0 32px; padding-left: 8px; }
.tile.light { background: #3a3d48; }
.light + .light { margin-left: 11px; }
.side-panel { width: 132px; flex: none; align-items: center; justify-content: flex-end; gap: 13px; }
.tray { display: flex; align-items: center; flex: none; width: 196px; height: 36px; margin: 0 6px 0 8px; padding-left: 4px; gap: 8px; background: #3d3f4a; }
.exit { position: relative; display: flex; width: 34px; margin-left: 4px; }
.exit button { position: absolute; left: 4px; top: -4px; color: #fff; font-size: 13px; line-height: 16px; }
.ime { width: 18px; margin: 0 4px 0 6px; font-size: 15px; font-weight: 700; }
.clock { display: flex; flex-direction: column; align-items: center; flex: none; width: 51px; height: 39px; padding-top: 2px; background: #292929; color: #0c0c0c; font-size: 12px; line-height: 18px; white-space: nowrap; }
</style>
